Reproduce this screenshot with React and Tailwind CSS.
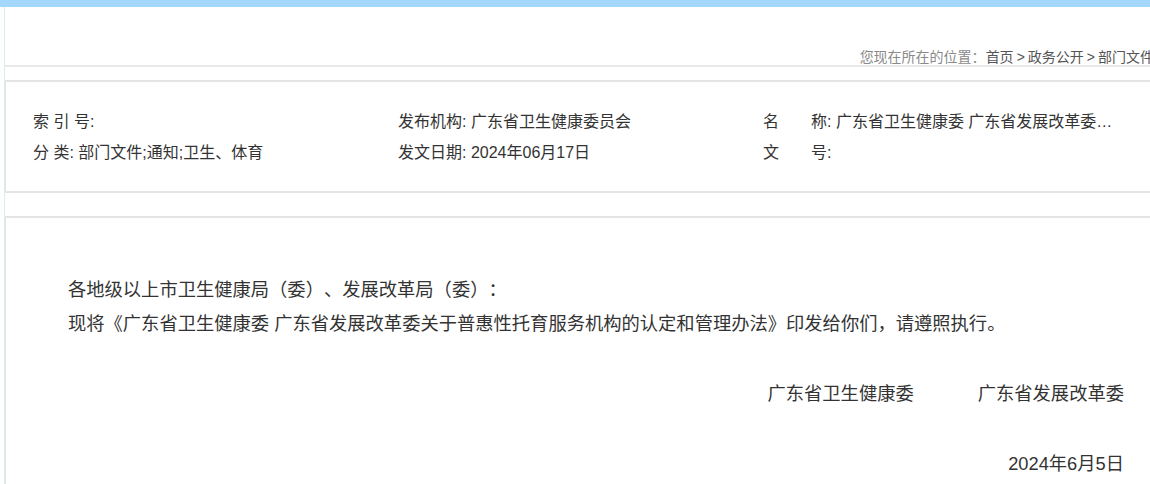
const FONT = "font-['Liberation_Sans','Noto_Sans_CJK_SC',sans-serif]";

function InfoCell({ label, value, className = "" }) {
  return (
    <div className={["truncate", className].join(" ")}>
      {label}: {value}
    </div>
  );
}

export default function App() {
  return (
    <div
      className={`min-h-screen w-full overflow-hidden bg-white [text-spacing-trim:space-all] ${FONT}`}
    >
      <div className="h-[7px] w-full bg-[#a3d8fc]" />

      <div className="ml-[4px] w-[1170px] border-l border-[#d9eeee]">
        {/* breadcrumb */}
        <div className="flex h-[60px] items-end justify-end border-b-2 border-[#e8e8e8] pr-[20px]">
          <p className="whitespace-nowrap text-[14px] leading-[16px] text-[#8a8a8a]">
            您现在所在的位置：
            <span className="text-[#555]">
              首页<span className="px-[3px]">&gt;</span>政务公开
              <span className="px-[3px]">&gt;</span>部门文件
            </span>
          </p>
        </div>

        {/* file info */}
        <div className="mt-[13px] border-y-2 border-l border-[#e4e4e4] pb-[23px] pl-[27px] pt-[24px] text-[16px] leading-[31px] text-[#333]">
          <div className="grid grid-cols-[365px_365px_352px]">
            <InfoCell label="索 引 号" value="" />
            <InfoCell label="发布机构" value="广东省卫生健康委员会" />
            <InfoCell
              label="名　　称"
              value="广东省卫生健康委 广东省发展改革委关于印发广东省普惠性托育服务机构的认定和管理办法的通知"
            />
            <InfoCell label="分 类" value="部门文件;通知;卫生、体育" />
            <InfoCell label="发文日期" value="2024年06月17日" />
            <InfoCell label="文　　号" value="" />
          </div>
        </div>

        {/* body */}
        <div className="mt-[23px] border-t-2 border-l border-[#e4e4e4] pb-[20px] pl-[62px] pr-[50px] pt-[55px] text-[18.3px] leading-[34px] text-[#333]">
          <p>各地级以上市卫生健康局（委）、发展改革局（委）：</p>
          <p>
            现将《广东省卫生健康委 广东省发展改革委关于普惠性托育服务机构的认定和管理办法》印发给你们，请遵照执行。
          </p>
          <div className="mt-[36px] flex justify-end gap-[64px]">
            <span>广东省卫生健康委</span>
            <span>广东省发展改革委</span>
          </div>
          <p className="mt-[36px] text-right">2024年6月5日</p>
        </div>
      </div>
    </div>
  );
}
